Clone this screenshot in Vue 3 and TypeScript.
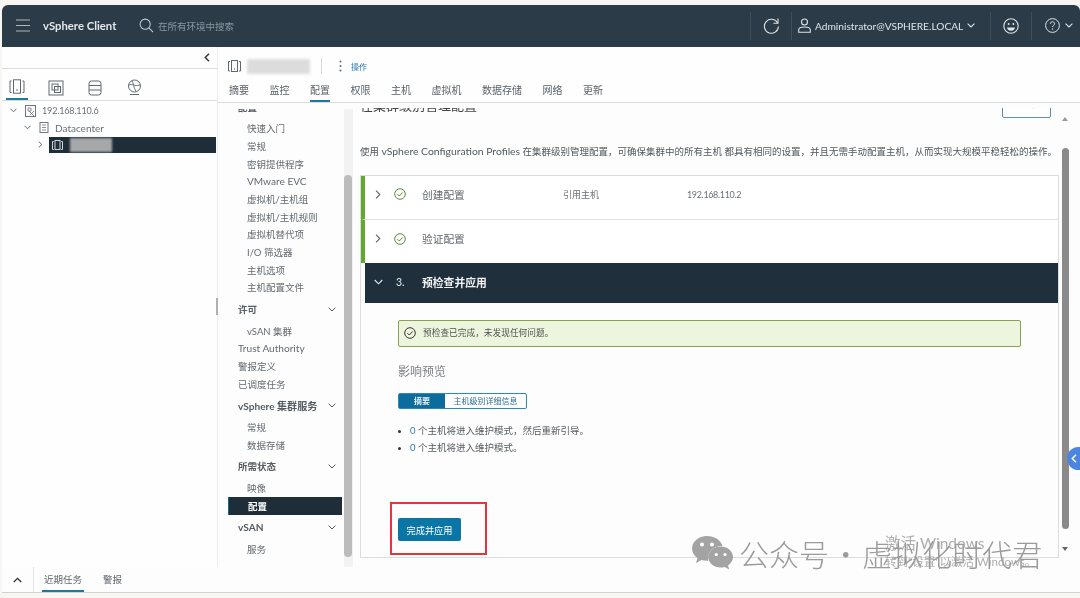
<script setup lang="ts">
interface NavRow { label: string; kind: 'head' | 'sub' | 'root' | 'active'; lat?: boolean; }
const nav: NavRow[] = [
  { label: '配置', kind: 'head' },
  { label: '快速入门', kind: 'sub' },
  { label: '常规', kind: 'sub' },
  { label: '密钥提供程序', kind: 'sub' },
  { label: 'VMware EVC', kind: 'sub', lat: true },
  { label: '虚拟机/主机组', kind: 'sub' },
  { label: '虚拟机/主机规则', kind: 'sub' },
  { label: '虚拟机替代项', kind: 'sub' },
  { label: 'I/O 筛选器', kind: 'sub' },
  { label: '主机选项', kind: 'sub' },
  { label: '主机配置文件', kind: 'sub' },
  { label: '许可', kind: 'head' },
  { label: 'vSAN 集群', kind: 'sub' },
  { label: 'Trust Authority', kind: 'root', lat: true },
  { label: '警报定义', kind: 'root' },
  { label: '已调度任务', kind: 'root' },
  { label: 'vSphere 集群服务', kind: 'head', lat: true },
  { label: '常规', kind: 'sub' },
  { label: '数据存储', kind: 'sub' },
  { label: '所需状态', kind: 'head' },
  { label: '映像', kind: 'sub' },
  { label: '配置', kind: 'active' },
  { label: 'vSAN', kind: 'head', lat: true },
  { label: '服务', kind: 'sub' },
];
const tabs: string[] = ['摘要', '监控', '配置', '权限', '主机', '虚拟机', '数据存储', '网络', '更新'];
</script>

<template>
  <div class="page">
    <header class="topbar">
      <svg class="burger" width="14" height="13" viewBox="0 0 14 13"><path d="M0 1h14M0 6.5h14M0 12h14" stroke="#aeb8bf" stroke-width="1.1" fill="none"/></svg>
      <span class="brand">vSphere Client</span>
      <svg class="search" width="15" height="15" viewBox="0 0 16 16"><circle cx="6.6" cy="6.6" r="5.4" stroke="#c4ccd2" stroke-width="1.1" fill="none"/><path d="M10.5 10.5l4.5 4.5" stroke="#c4ccd2" stroke-width="1.1"/></svg>
      <span class="placeholder">在所有环境中搜索</span>
      <div class="tools">
        <div class="tool refresh">
          <svg width="17" height="17" viewBox="0 0 17 17"><path d="M14.6 6A7 7 0 1 0 15.4 9.5" stroke="#dfe4e7" stroke-width="1.1" fill="none"/><path d="M15 1.5V6.2H10.4" stroke="#dfe4e7" stroke-width="1.1" fill="none"/></svg>
        </div>
        <div class="tool user">
          <svg width="13" height="15" viewBox="0 0 13 15"><circle cx="6.5" cy="4" r="3" stroke="#dfe4e7" stroke-width="1.1" fill="none"/><path d="M.7 14.2v-2.4c0-1.6 2.6-2.8 5.8-2.8s5.8 1.2 5.8 2.8v2.4z" stroke="#dfe4e7" stroke-width="1.1" fill="none"/></svg>
          <span class="uname">Administrator@VSPHERE.LOCAL</span>
          <svg width="8" height="5" viewBox="0 0 8 5"><path d="M.6.6L4 4l3.4-3.4" stroke="#dfe4e7" stroke-width="1.1" fill="none"/></svg>
        </div>
        <div class="tool smile">
          <svg width="16" height="16" viewBox="0 0 16 16"><circle cx="8" cy="8" r="7.2" stroke="#dfe4e7" stroke-width="1.1" fill="none"/><circle cx="5.6" cy="6" r="1" fill="#dfe4e7"/><circle cx="10.4" cy="6" r="1" fill="#dfe4e7"/><path d="M4 9.4h8c-.4 2.2-2 3.3-4 3.3s-3.6-1.1-4-3.3z" fill="#dfe4e7"/></svg>
        </div>
        <div class="tool help">
          <svg width="15" height="15" viewBox="0 0 15 15"><circle cx="7.5" cy="7.5" r="6.9" stroke="#dfe4e7" stroke-width="1" fill="none"/><path d="M5.4 5.8c0-1.3 1-2 2.1-2s2.1.7 2.1 1.9c0 1.6-2.1 1.6-2.1 3.3" stroke="#dfe4e7" stroke-width="1" fill="none"/><circle cx="7.5" cy="11" r=".7" fill="#dfe4e7"/></svg>
          <svg width="8" height="5" viewBox="0 0 8 5"><path d="M.6.6L4 4l3.4-3.4" stroke="#dfe4e7" stroke-width="1.1" fill="none"/></svg>
        </div>
      </div>
    </header>

    <div class="shell">
      <aside class="left">
        <i class="handle"></i>
        <div class="collapse">
          <svg width="6" height="9" viewBox="0 0 6 9"><path d="M5 .7L1.2 4.5 5 8.3" stroke="#333" stroke-width="1.4" fill="none"/></svg>
        </div>
        <div class="icon-tabs">
          <div class="itab on">
            <svg width="16" height="15" viewBox="0 0 16 15"><path d="M2.5 2H1v11.5h1.5M13.5 2H15v11.5h-1.5" stroke="#5d6871" fill="none"/><rect x="4.5" y=".8" width="7" height="13.4" stroke="#5d6871" fill="none"/><circle cx="8" cy="11" r=".8" fill="#5d6871"/></svg>
          </div>
          <div class="itab">
            <svg width="16" height="16" viewBox="0 0 16 16"><rect x="1" y="1" width="14" height="14" stroke="#5d6871" fill="none"/><rect x="4" y="4" width="6" height="6" stroke="#5d6871" fill="none"/><rect x="6.5" y="6.5" width="6" height="6" stroke="#5d6871" fill="none"/></svg>
          </div>
          <div class="itab">
            <svg width="14" height="16" viewBox="0 0 14 16"><rect x="1" y="1" width="12" height="14" rx="2.5" stroke="#5d6871" fill="none"/><path d="M1 5.5h12M1 10h12" stroke="#5d6871" fill="none"/></svg>
          </div>
          <div class="itab">
            <svg width="15" height="17" viewBox="0 0 15 17"><circle cx="7.5" cy="7" r="6" stroke="#5d6871" fill="none"/><path d="M2 6c3-2 5 2 11 0M5 1.8c2 3 1 6 4 10.5" stroke="#5d6871" stroke-width=".9" fill="none"/><path d="M3 15.5h9" stroke="#5d6871" fill="none"/></svg>
          </div>
        </div>
        <div class="tree">
          <div class="node n0">
            <svg class="tw" width="7" height="5" viewBox="0 0 7 5"><path d="M.6.8L3.5 3.8 6.4.8" stroke="#667" fill="none"/></svg>
            <svg width="11" height="12" viewBox="0 0 11 12"><rect x=".5" y=".5" width="10" height="11" stroke="#6c767e" fill="none"/><path d="M3 3h3v3H3zM4 6l5 5M9 6l-4 4" stroke="#6c767e" stroke-width=".8" fill="none"/></svg>
            <span class="ipnode">192.168.110.6</span>
          </div>
          <div class="node n1">
            <svg class="tw" width="7" height="5" viewBox="0 0 7 5"><path d="M.6.8L3.5 3.8 6.4.8" stroke="#667" fill="none"/></svg>
            <svg width="10" height="11" viewBox="0 0 10 11"><rect x="1" y=".5" width="8" height="10" stroke="#6c767e" fill="none"/><path d="M3 3h4M3 5.5h4M3 8h4" stroke="#6c767e" stroke-width=".8"/></svg>
            <span>Datacenter</span>
          </div>
          <div class="node n2">
            <svg class="tw2" width="5" height="7" viewBox="0 0 5 7"><path d="M.8.6L3.8 3.5.8 6.4" stroke="#667" fill="none"/></svg>
            <div class="sel">
              <svg width="11" height="10" viewBox="0 0 11 10"><path d="M1.8 1.5H.5v8h1.3M9.2 1.5h1.3v8H9.2" stroke="#cfd6da" fill="none"/><rect x="3" y=".5" width="5" height="9" stroke="#cfd6da" fill="none"/></svg>
              <i class="smudge"></i>
            </div>
          </div>
        </div>
      </aside>

      <section class="right">
        <div class="obj-head">
          <div class="title-row">
            <svg width="13" height="12" viewBox="0 0 13 12"><path d="M2 1.5H.5V11H2M11 1.5h1.5V11H11" stroke="#5d6871" fill="none"/><rect x="3.5" y=".5" width="6" height="11" stroke="#5d6871" fill="none"/><circle cx="6.5" cy="9" r=".7" fill="#5d6871"/></svg>
            <i class="blurname"></i>
            <i class="vline"></i>
            <svg class="kebab" width="3" height="12" viewBox="0 0 3 12"><circle cx="1.5" cy="1.5" r="1" fill="#5a6a75"/><circle cx="1.5" cy="6" r="1" fill="#5a6a75"/><circle cx="1.5" cy="10.5" r="1" fill="#5a6a75"/></svg>
            <span class="action">操作</span>
          </div>
          <nav class="tabs">
            <span v-for="t in tabs" :key="t" class="tab" :class="{ cur: t === '配置' }">{{ t }}</span>
          </nav>
        </div>

        <div class="work">
          <div class="side">
            <div v-for="(r, i) in nav" :key="i" class="row" :class="[r.kind, { lat: r.lat }]">
              <span>{{ r.label }}</span>
              <svg v-if="r.kind === 'head'" width="8" height="5" viewBox="0 0 8 5"><path d="M.6.6L4 4l3.4-3.4" stroke="#555" stroke-width="1" fill="none"/></svg>
            </div>
          </div>
          <div class="side-bar"><i></i></div>

          <div class="panel">
            <div class="col">
              <div class="ptitle">
                <span>在集群级别管理配置</span>
                <span class="ghost">导出</span>
              </div>
              <p class="desc">使用 <span class="dl">vSphere Configuration Profiles</span> 在集群级别管理配置，可确保集群中的所有主机 都具有相同的设置，并且无需手动配置主机，从而实现大规模平稳轻松的操作。</p>
              <div class="card">
                <div class="step s1">
                  <svg class="chev" width="6" height="9" viewBox="0 0 6 9"><path d="M1 .7L4.8 4.5 1 8.3" stroke="#666" stroke-width="1.1" fill="none"/></svg>
                  <svg class="ok" width="12" height="12" viewBox="0 0 12 12"><circle cx="6" cy="6" r="5.3" stroke="#5f8a3a" fill="none"/><path d="M3.4 6.1l1.9 1.9 3.4-3.6" stroke="#5f8a3a" fill="none"/></svg>
                  <span class="lbl">创建配置</span>
                  <span class="ref">引用主机</span>
                  <span class="ip">192.168.110.2</span>
                </div>
                <div class="step s2">
                  <svg class="chev" width="6" height="9" viewBox="0 0 6 9"><path d="M1 .7L4.8 4.5 1 8.3" stroke="#666" stroke-width="1.1" fill="none"/></svg>
                  <svg class="ok" width="12" height="12" viewBox="0 0 12 12"><circle cx="6" cy="6" r="5.3" stroke="#5f8a3a" fill="none"/><path d="M3.4 6.1l1.9 1.9 3.4-3.6" stroke="#5f8a3a" fill="none"/></svg>
                  <span class="lbl">验证配置</span>
                </div>
                <div class="step s3">
                  <svg class="chev3" width="9" height="6" viewBox="0 0 9 6"><path d="M.7 1l3.8 3.8L8.3 1" stroke="#e6eaec" stroke-width="1.1" fill="none"/></svg>
                  <span class="num">3.</span>
                  <span class="lbl3">预检查并应用</span>
                </div>
                <div class="body">
                  <div class="alert">
                    <svg width="12" height="12" viewBox="0 0 12 12"><circle cx="6" cy="6" r="5.3" stroke="#333" fill="none"/><path d="M3.4 6.1l1.9 1.9 3.4-3.6" stroke="#333" fill="none"/></svg>
                    <span>预检查已完成，未发现任何问题。</span>
                  </div>
                  <h3 class="impact">影响预览</h3>
                  <div class="toggle">
                    <span class="t-on">摘要</span>
                    <span class="t-off">主机级别详细信息</span>
                  </div>
                  <ul class="list">
                    <li><b>0</b> 个主机将进入维护模式，然后重新引导。</li>
                    <li><b>0</b> 个主机将进入维护模式。</li>
                  </ul>
                  <button class="finish" type="button">完成并应用</button>
                </div>
              </div>
            </div>
            <div class="main-bar">
              <em class="up"></em>
              <i></i>
              <em class="down"></em>
            </div>
          </div>
        </div>
      </section>
    </div>

    <footer class="foot">
      <div class="fchev">
        <svg width="9" height="6" viewBox="0 0 9 6"><path d="M.8 5L4.5 1.3 8.2 5" stroke="#333" stroke-width="1.3" fill="none"/></svg>
      </div>
      <span class="ftab on">近期任务</span>
      <span class="ftab">警报</span>
    </footer>

    <div class="redbox"></div>
    <div class="badge">
      <svg width="6" height="9" viewBox="0 0 6 9"><path d="M5 .8L1.3 4.5 5 8.2" stroke="#fff" stroke-width="1.5" fill="none"/></svg>
    </div>
    <div class="activate"><div class="a1">激活 Windows</div><div class="a2">转到"设置"以激活 Windows。</div></div>
    <div class="mark">
      <svg width="41" height="34" viewBox="0 0 41 34"><path d="M15 0C6.800 0 0 5.500 0 12.500c0 3.900 2.200 7.300 5.500 9.600L4 27l5.500-3c1.800.5 3.600.8 5.500.8.500 0 1 0 1.500-.1-.3-1-.5-2.100-.5-3.200 0-6.400 6.200-11.500 13.800-11.500h.7C28.900 4.200 22.600 0 15 0z" fill="#a3a3a3"/><path d="M41 21c0-5.800-5.600-10.500-12.400-10.500S16.200 15.200 16.200 21s5.600 10.500 12.400 10.500c1.500 0 2.900-.2 4.200-.6l4.400 2.600-1.200-4.100C38.900 27.400 41 24.400 41 21z" fill="#a3a3a3"/><circle cx="10" cy="8.500" r="2" fill="#fff"/><circle cx="20" cy="8.500" r="2" fill="#fff"/><circle cx="24.300" cy="18.500" r="1.600" fill="#fff"/><circle cx="33" cy="18.500" r="1.600" fill="#fff"/></svg>
      <span>公众号 · 虚拟化时代君</span>
    </div>
  </div>
</template>

<style>
html, body { margin: 0; background: #fbfaf7; }
</style>

<style scoped>
.page {
  position: relative;
  width: 1080px;
  height: 598px;
  overflow: hidden;
  padding-top: 5px;
  box-sizing: border-box;
  background: #f8f6f2;
  font-family: Lato, "Noto Sans CJK SC", sans-serif;
  color: #5c6166;
  font-size: 9.5px;
  filter: blur(0.35px);
}
.topbar {
  height: 42px;
  margin-left: 2px;
  padding-bottom: 1px;
  box-sizing: border-box;
  background: #2b3b47;
  border-radius: 6px 6px 0 0;
  display: flex;
  align-items: center;
  color: #e8ecee;
}
.burger { margin-left: 14px; }
.brand { margin-left: 13px; font-size: 11.3px; font-weight: 700; width: 81px; white-space: nowrap; color: #e4e8ea; }
.search { margin-left: 15px; }
.placeholder { margin-left: 4px; color: #8b98a1; font-size: 9.5px; }
.tools { margin-left: auto; padding-right: 2px; display: flex; align-items: center; height: 41px; }
.tool { display: flex; align-items: center; justify-content: center; height: 28px; border-left: 1px solid #3f4f5a; box-sizing: border-box; }
.refresh { width: 41px; }
.user { width: 199px; justify-content: flex-start; padding-left: 6px; }
.uname { margin: 0 4px 0 4px; font-size: 10.2px; color: #dfe4e7; white-space: nowrap; }
.smile { width: 41px; }
.help { width: 47px; gap: 5px; justify-content: flex-start; padding-left: 13px; }

.shell { display: flex; height: 520px; background: #fefefe; margin-left: 2px; }
.left { width: 215px; flex: none; border-right: 1px solid #ececec; position: relative; }
.handle { position: absolute; right: -1px; top: 251px; width: 2px; height: 17px; background: #b0b0b0; }
.collapse { height: 21px; display: flex; align-items: center; justify-content: flex-end; padding-right: 7px; border-bottom: 1px solid #dcdcdc; }
.icon-tabs { height: 31px; border-bottom: 1px solid #dcdcdc; display: flex; padding-left: 4px; }
.itab { width: 22px; margin-right: 17px; display: flex; align-items: center; justify-content: center; box-sizing: border-box; padding-top: 6px; height: 31px; }
.itab.on { border-bottom: 2px solid #1d7a9b; }
.tree { padding-top: 1px; font-size: 10px; color: #6a7177; }
.node { display: flex; align-items: center; height: 17px; gap: 6px; }
.ipnode { font-size: 9px; letter-spacing: -.15px; }
.n0 { padding-left: 8px; }
.n0 svg:nth-child(2) { margin-left: 2px; }
.n1 { padding-left: 22px; }
.n1 svg:nth-child(2) { margin-left: 2px; }
.n2 { padding-left: 36px; gap: 6px; }
.sel { width: 167px; height: 16px; background: #1f2d38; display: flex; align-items: center; padding-left: 3px; box-sizing: border-box; }
.smudge { display: block; width: 42px; height: 14px; margin-left: 7px; background: #a5a7a8; filter: blur(1px); }

.right { flex: 1; min-width: 0; display: flex; flex-direction: column; }
.obj-head { height: 55px; border-bottom: 1px solid #dddddd; }
.title-row { height: 33px; display: flex; align-items: center; padding: 5px 0 0 10px; box-sizing: border-box; }
.blurname { display: block; width: 63px; height: 15px; margin-left: 6px; background: #dcdcdc; filter: blur(1.5px); }
.vline { display: block; width: 1px; height: 16px; margin-left: 11px; background: #d7d7d7; }
.kebab { margin-left: 17px; }
.action { margin-left: 9px; font-size: 8px; color: #2b7cab; }
.tabs { height: 22px; display: flex; gap: 20.5px; padding-left: 11px; font-size: 10px; color: #5a6268; }
.tab { height: 22px; line-height: 21px; box-sizing: border-box; }
.tab.cur { border-bottom: 2px solid #1d7a9b; }

.work { flex: 1; min-height: 0; display: flex; background: #fdfdfd; }
.side { width: 114px; margin: 6px 0 0 10px; overflow: hidden; flex: none; height: 458px; }
.row { display: flex; align-items: center; justify-content: space-between; height: 17.7px; color: #636a70; font-size: 9.5px; white-space: nowrap; box-sizing: border-box; }
.row.lat { font-size: 10.1px; }
.row:first-child { margin-top: -15.2px; }
.row.head { height: 25.6px; padding: 0 6px 0 10px; font-weight: 700; color: #555c62; }
.row.sub { padding-left: 19px; }
.row.root { padding-left: 10px; }
.row.active { padding-left: 19px; background: #1f2d38; color: #fff; font-weight: 700; border-left: 1px solid #0f6f90; }
.side-bar { width: 9px; flex: none; margin: 6px 0 0 2px; background: #f2f2f2; padding-top: 66px; height: 458px; box-sizing: border-box; }
.side-bar i { display: block; width: 8px; height: 382px; border-radius: 4px; background: #bcbcbc; }

.panel { flex: 1; min-width: 0; display: flex; overflow: hidden; margin-top: 5px; padding-left: 7px; height: 459px; }
.col { width: 699px; flex: none; }
.ptitle { display: flex; align-items: flex-end; justify-content: space-between; height: 26px; margin-top: -16px; font-size: 13px; color: #444; padding-right: 8px; white-space: nowrap; }
.ptitle > span:first-child { line-height: 26px; }
.ghost { display: block; width: 49px; height: 21px; box-sizing: border-box; border: 1px solid #5f93ab; border-radius: 2px; background: #fff; font-size: 8px; line-height: 12px; text-align: center; color: #6b7a83; }
.desc { margin: 24px 0 0; height: 18px; line-height: 18px; font-size: 9.5px; color: #52585d; white-space: nowrap; }
.dl { font-size: 10.4px; }
.card { margin-top: 15px; height: 383px; box-sizing: border-box; border: 1px solid #dcdcdc; background: #fdfdfd; }
.step { display: flex; align-items: center; box-sizing: border-box; }
.s1 { height: 44px; border-left: 4px solid #62a82e; border-bottom: 1px solid #dfdfdf; background: #fff; padding-bottom: 7px; }
.s2 { height: 43px; border-left: 4px solid #62a82e; background: #fff; padding-bottom: 6px; }
.chev { margin-left: 10px; }
.ok { margin-left: 13px; }
.lbl { margin-left: 16px; width: 141px; font-size: 10.7px; color: #62686d; }
.ref { width: 124px; font-size: 9px; color: #6b7075; }
.ip { font-size: 9px; letter-spacing: -.35px; color: #6b7075; }
.s3 { height: 40px; margin-left: 4px; background: #1f2f3b; color: #e8ecee; padding-bottom: 3px; }
.chev3 { margin-left: 9px; }
.num { margin-left: 13px; width: 26px; font-size: 10.5px; }
.lbl3 { font-size: 10.8px; font-weight: 700; color: #f0f2f3; }
.body { padding: 17px 0 0 37px; }
.alert { width: 623px; height: 27px; box-sizing: border-box; border: 1px solid #87a24f; border-radius: 2px; background: #eef5df; display: flex; align-items: center; gap: 7px; padding: 0 0 2px 5px; font-size: 8.7px; color: #4c5250; }
.impact { margin: 16px 0 0; height: 18px; line-height: 18px; font-size: 12px; font-weight: 400; color: #7c8084; }
.toggle { margin-top: 12px; display: flex; width: 129px; height: 16px; box-sizing: border-box; border: 1px solid #2c8bb5; border-radius: 2px; font-size: 8px; line-height: 14px; background: #fff; }
.t-on { width: 46px; background: #0b6c9d; color: #e9f2f6; text-align: center; font-weight: 700; }
.t-off { flex: 1; color: #2e6f92; text-align: center; }
.list { margin: 13px 0 0; padding: 0 0 0 12px; font-size: 9.5px; color: #565c61; list-style: disc; line-height: 17px; }
.list li::marker { font-size: 8px; color: #333; }
.list b { font-weight: 400; color: #2b7cab; }
.finish { display: block; margin-top: 62px; width: 63px; height: 23px; padding: 0; border: none; border-radius: 2px; background: #0a76a6; color: #fff; font: inherit; font-size: 9.2px; }
.main-bar { width: 8px; margin-left: 3px; height: 459px; position: relative; padding-top: 40px; box-sizing: border-box; }
.main-bar i { display: block; width: 7px; height: 381px; border-radius: 3.5px; background: #8a8a8a; }
.up, .down { position: absolute; left: 0; width: 0; height: 0; border-left: 3.5px solid transparent; border-right: 3.5px solid transparent; }
.up { top: 9px; border-bottom: 4px solid #999; }
.down { top: 439px; border-top: 4px solid #666; }

.foot { height: 26px; margin-left: 2px; display: flex; align-items: center; background: #fdfdfd; border-bottom: 1px solid #cfd3d6; font-size: 9.5px; color: #60666b; box-sizing: border-box; }
.fchev { width: 32px; height: 25px; border-right: 1px solid #e2e2e2; display: flex; align-items: center; justify-content: center; box-sizing: border-box; }
.ftab { height: 25px; line-height: 25px; box-sizing: border-box; }
.ftab.on { margin-left: 8px; padding: 0 2px; border-bottom: 2px solid #1d7a9b; width: 42px; text-align: center; }
.ftab + .ftab { margin-left: 19px; }

.redbox { position: absolute; left: 390px; top: 502px; width: 97px; height: 53px; box-sizing: border-box; border: 2px solid #e7333a; }
.badge { position: absolute; left: 1067px; top: 447px; width: 13px; height: 23px; background: #4a86e0; border-radius: 12px 0 0 12px; display: flex; align-items: center; justify-content: center; }
.activate { position: absolute; left: 885px; top: 535px; color: #aeaeae; white-space: nowrap; }
.a1 { font-size: 15.5px; line-height: 16px; }
.a2 { font-size: 11.5px; line-height: 14px; margin-top: 4px; }
.mark { position: absolute; left: 692px; top: 536px; display: flex; align-items: center; gap: 6px; color: #9b9b9b; }
.mark span { font-size: 30px; line-height: 34px; white-space: nowrap; word-spacing: -5px; font-family: "Noto Sans CJK SC", sans-serif; font-weight: 300; }
</style>
